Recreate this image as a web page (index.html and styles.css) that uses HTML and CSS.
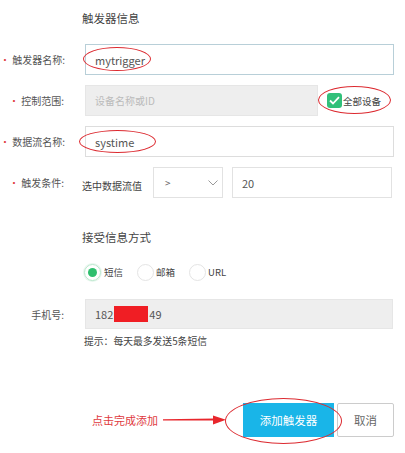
FILE: index.html
```html
<!DOCTYPE html>
<html lang="zh">
<head>
<meta charset="utf-8">
<link rel="stylesheet" href="styles.css">
</head>
<body>
<div class="form">
  <div class="section-title">触发器信息</div>

  <div class="row">
    <div class="label"><span class="req">•</span> 触发器名称:</div>
    <div class="field input active">mytrigger</div>
  </div>

  <div class="row">
    <div class="label"><span class="req">•</span> 控制范围:</div>
    <div class="field input disabled short">设备名称或ID</div>
    <label class="check"><span class="box"><svg width="11" height="9" viewBox="0 0 11 9"><path d="M1 4.5 L4 7.5 L10 1.2" fill="none" stroke="#fff" stroke-width="1.8"/></svg></span>全部设备</label>
  </div>

  <div class="row">
    <div class="label"><span class="req">•</span> 数据流名称:</div>
    <div class="field input">systime</div>
  </div>

  <div class="row">
    <div class="label"><span class="req">•</span> 触发条件:</div>
    <div class="cond-text">选中数据流值</div>
    <div class="select">&gt;<svg class="chev" width="10" height="6" viewBox="0 0 10 6"><path d="M0.5 0.5 L5 5 L9.5 0.5" fill="none" stroke="#999" stroke-width="1"/></svg></div>
    <div class="field input value">20</div>
  </div>

  <div class="section-title second">接受信息方式</div>

  <div class="radios">
    <span class="radio on"><span class="dot"></span></span><span class="rtext">短信</span>
    <span class="radio"></span><span class="rtext">邮箱</span>
    <span class="radio"></span><span class="rtext">URL</span>
  </div>

  <div class="row phone-row">
    <div class="label">手机号:</div>
    <div class="field input disabled phone">182<span class="redact"></span>49</div>
  </div>

  <div class="hint">提示：每天最多发送5条短信</div>

  <div class="actions">
    <span class="note">点击完成添加</span>
    <svg class="arrow" width="64" height="10" viewBox="0 0 64 10"><path d="M0 4.2 L52 3.6 L52 5.4 L0 5.4 Z" fill="#e8262c"/><path d="M50 0.5 L63 4.8 L50 9.5 Z" fill="#e8262c"/></svg>
    <button class="btn primary">添加触发器</button>
    <button class="btn">取消</button>
  </div>

  <span class="ring r1"></span>
  <span class="ring r2"></span>
  <span class="ring r3"></span>
  <span class="ring r4"></span>
</div>
</body>
</html>
```

FILE: styles.css
```css
* { box-sizing: border-box; }
html, body { margin: 0; padding: 0; background: #fff; }
body {
  width: 405px;
  height: 453px;
  font-family: "Noto Sans CJK SC", "Noto Sans", sans-serif;
  font-size: 10px;
  color: #555;
}
.form {
  position: relative;
  padding-top: 10px;
}
.section-title {
  margin-left: 82px;
  font-size: 11.5px;
  line-height: 16px;
  color: #444;
  margin-bottom: 18px;
}
.section-title.second {
  margin-top: 31px;
  margin-bottom: 17px;
}
.row {
  display: flex;
  align-items: center;
  height: 31px;
  margin-bottom: 10px;
}
.label {
  width: 64px;
  text-align: right;
  margin-right: 21px;
  color: #555;
  white-space: nowrap;
  font-size: 10px;
}
.req { color: #e0393e; }
.field.input {
  width: 309px;
  height: 31px;
  border: 1px solid #ddd;
  padding-left: 9px;
  display: flex;
  align-items: center;
  color: #555;
  font-size: 11px;
}
.field.input.active { border-color: #b8cfd8; }
.field.input.disabled {
  background: #eeeeee;
  border-color: #e6e6e6;
  color: #bbb;
  font-size: 10px;
}
.field.input.short { width: 233px; }
.check {
  display: flex;
  align-items: center;
  margin-left: 9px;
  color: #444;
  font-size: 9.5px;
}
.box {
  width: 15px;
  height: 15px;
  border-radius: 3px;
  background: #31c07a;
  display: flex;
  align-items: center;
  justify-content: center;
  margin-right: 1px;
}
.cond-text {
  margin-left: -3px;
  width: 71px;
  color: #444;
  padding-top: 6px;
}
.select {
  width: 70px;
  height: 31px;
  border: 1px solid #e2e2e2;
  display: flex;
  align-items: center;
  justify-content: space-between;
  padding: 0 4px 0 11px;
  color: #666;
  font-size: 10px;
  margin-right: 9px;
}
.field.input.value {
  width: 160px;
  border-color: #e2e2e2;
}
.radios {
  display: flex;
  align-items: center;
  height: 20px;
  padding-left: 84px;
  color: #444;
  margin-bottom: 17px;
  font-size: 9.5px;
}
.radio {
  width: 17px;
  height: 17px;
  border-radius: 50%;
  border: 1px solid #e4e4e4;
  display: flex;
  align-items: center;
  justify-content: center;
  margin-right: 2px;
}
.radio.on { border-color: #b9e6cc; box-shadow: 0 0 0 1px #e8f7ee; margin-right: 3px; }
.dot {
  width: 9px;
  height: 9px;
  border-radius: 50%;
  background: #2fbf6e;
}
.rtext { margin-right: 14px; }
.phone-row { height: 30px; margin-bottom: 5px; }
.field.input.phone {
  height: 30px;
  width: 308px;
  color: #555;
  font-size: 11px;
}
.redact {
  display: inline-block;
  width: 34px;
  height: 16px;
  background: #f01e24;
  margin: 0 1px;
}
.hint {
  margin-left: 84px;
  line-height: 14px;
  color: #444;
  font-size: 9.8px;
}
.actions {
  margin-top: 55px;
  display: flex;
  align-items: center;
  height: 34px;
  padding-left: 92px;
}
.note {
  color: #e0393e;
  font-size: 11px;
  margin-right: 5px;
}
.arrow { margin-right: 16px; }
.btn {
  height: 34px;
  border: 1px solid #ccc;
  background: #fff;
  color: #666;
  font-family: inherit;
  font-size: 11.5px;
  width: 57px;
  padding: 0;
  border-radius: 2px;
}
.btn.primary {
  width: 91px;
  background: #19b5e8;
  border-color: #19b5e8;
  color: #fff;
  margin-right: 3px;
  border-radius: 0;
}
.ring {
  position: absolute;
  border: 1.5px solid #dc2a30;
  border-radius: 50%;
  pointer-events: none;
}
.r1 { left: 83px; top: 47px; width: 68px; height: 24px; }
.r2 { left: 318px; top: 86px; width: 73px; height: 28px; }
.r3 { left: 79px; top: 130px; width: 77px; height: 23px; }
.r4 { left: 225px; top: 398px; width: 117px; height: 46px; }
```
